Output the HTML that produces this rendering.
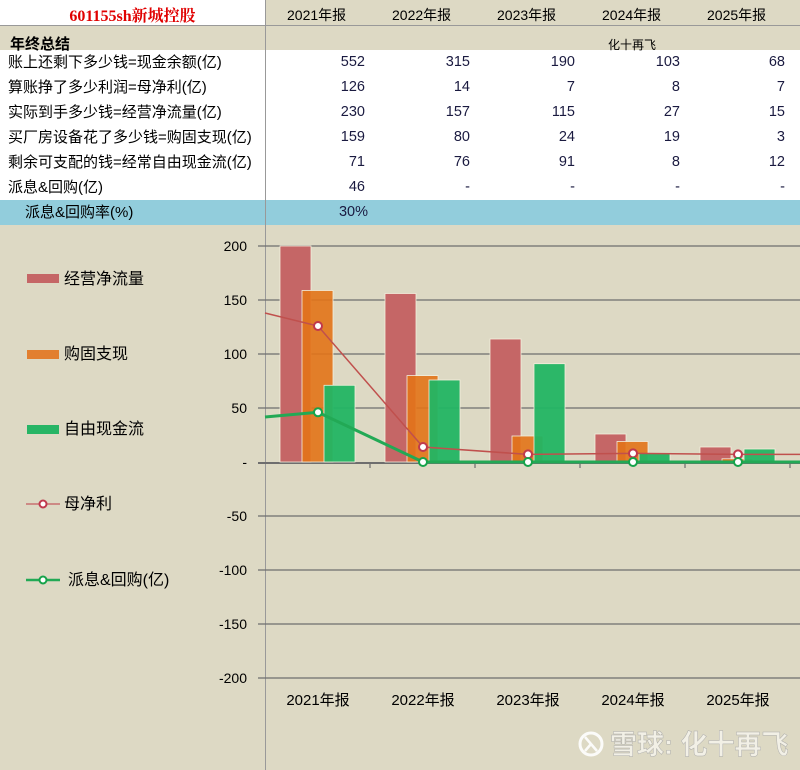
<!DOCTYPE html>
<html><head><meta charset="utf-8"><style>
body{margin:0;width:800px;height:770px;overflow:hidden;background:#DDD9C4;font-family:"Liberation Sans","Noto Sans CJK SC",sans-serif;position:relative}
.a{position:absolute;white-space:nowrap}
.r{position:absolute;height:25px;line-height:25px;font-size:15px;color:#000}
.n{position:absolute;width:80px;text-align:right;font-size:14.5px;color:#1a1a40}
</style></head><body>
<div class="a" style="left:0;top:0;width:265px;height:26px;background:#fff"></div>
<div class="a" style="left:0;top:25px;width:800px;height:1px;background:#999"></div>
<div class="a" style="left:0;top:50px;width:265px;height:150px;background:#fff"></div>
<div class="a" style="left:265px;top:50px;width:535px;height:150px;background:#fff"></div>
<div class="a" style="left:0;top:200px;width:800px;height:25px;background:#92CDDC"></div>
<div class="a" style="left:265px;top:0;width:1px;height:770px;background:#999"></div>
<div class="a" style="left:0;top:3px;width:265px;text-align:center;color:#e00000;font-weight:bold;font-size:16px;font-family:'Liberation Serif','Noto Serif CJK SC',serif">601155sh新城控股</div>
<div class="a" style="left:287px;top:5px;font-size:14px">2021年报</div>
<div class="a" style="left:392px;top:5px;font-size:14px">2022年报</div>
<div class="a" style="left:497px;top:5px;font-size:14px">2023年报</div>
<div class="a" style="left:602px;top:5px;font-size:14px">2024年报</div>
<div class="a" style="left:707px;top:5px;font-size:14px">2025年报</div>
<div class="a" style="left:10px;top:33px;font-size:15px;font-weight:bold">年终总结</div>
<div class="a" style="left:608px;top:36px;font-size:12px">化十再飞</div>
<div class="r" style="left:8px;top:50px">账上还剩下多少钱=现金余额(亿)</div>
<div class="r" style="left:8px;top:75px">算账挣了多少利润=母净利(亿)</div>
<div class="r" style="left:8px;top:100px">实际到手多少钱=经营净流量(亿)</div>
<div class="r" style="left:8px;top:125px">买厂房设备花了多少钱=购固支现(亿)</div>
<div class="r" style="left:8px;top:150px">剩余可支配的钱=经常自由现金流(亿)</div>
<div class="r" style="left:8px;top:175px">派息&amp;回购(亿)</div>
<div class="r" style="left:25px;top:200px">派息&amp;回购率(%)</div>
<div class="n" style="left:285px;top:54px">552</div><div class="n" style="left:390px;top:54px">315</div><div class="n" style="left:495px;top:54px">190</div><div class="n" style="left:600px;top:54px">103</div><div class="n" style="left:705px;top:54px">68</div>
<div class="n" style="left:285px;top:79px">126</div><div class="n" style="left:390px;top:79px">14</div><div class="n" style="left:495px;top:79px">7</div><div class="n" style="left:600px;top:79px">8</div><div class="n" style="left:705px;top:79px">7</div>
<div class="n" style="left:285px;top:104px">230</div><div class="n" style="left:390px;top:104px">157</div><div class="n" style="left:495px;top:104px">115</div><div class="n" style="left:600px;top:104px">27</div><div class="n" style="left:705px;top:104px">15</div>
<div class="n" style="left:285px;top:129px">159</div><div class="n" style="left:390px;top:129px">80</div><div class="n" style="left:495px;top:129px">24</div><div class="n" style="left:600px;top:129px">19</div><div class="n" style="left:705px;top:129px">3</div>
<div class="n" style="left:285px;top:154px">71</div><div class="n" style="left:390px;top:154px">76</div><div class="n" style="left:495px;top:154px">91</div><div class="n" style="left:600px;top:154px">8</div><div class="n" style="left:705px;top:154px">12</div>
<div class="n" style="left:285px;top:179px">46</div><div class="n" style="left:390px;top:179px">-</div><div class="n" style="left:495px;top:179px">-</div><div class="n" style="left:600px;top:179px">-</div><div class="n" style="left:705px;top:179px">-</div>
<div class="n" style="left:288px;top:204px">30%</div>

<svg class="a" style="left:0;top:0" width="800" height="770" font-family="Liberation Sans,Noto Sans CJK SC,sans-serif">
<g stroke="#6e6e6e" stroke-width="1.2">
<line x1="258" y1="246" x2="800" y2="246"/><line x1="258" y1="300" x2="800" y2="300"/><line x1="258" y1="354" x2="800" y2="354"/><line x1="258" y1="408" x2="800" y2="408"/>
<line x1="258" y1="516" x2="800" y2="516"/><line x1="258" y1="570" x2="800" y2="570"/><line x1="258" y1="624" x2="800" y2="624"/><line x1="258" y1="678" x2="800" y2="678"/>
<line x1="258" y1="463" x2="800" y2="463" stroke-width="2"/>
<line x1="370" y1="463" x2="370" y2="468"/><line x1="475" y1="463" x2="475" y2="468"/><line x1="580" y1="463" x2="580" y2="468"/><line x1="685" y1="463" x2="685" y2="468"/><line x1="790" y1="463" x2="790" y2="468"/>
</g>
<g font-size="14" text-anchor="end" fill="#000">
<text x="247" y="251">200</text><text x="247" y="305">150</text><text x="247" y="359">100</text><text x="247" y="413">50</text><text x="247" y="467">-</text>
<text x="247" y="521">-50</text><text x="247" y="575">-100</text><text x="247" y="629">-150</text><text x="247" y="683">-200</text>
</g>
<g font-size="15" text-anchor="middle" fill="#000">
<text x="318" y="705">2021年报</text><text x="423" y="705">2022年报</text><text x="528" y="705">2023年报</text><text x="633" y="705">2024年报</text><text x="738" y="705">2025年报</text>
</g>
<g stroke="#f3eedc" stroke-width="0.8">
<g fill="#C56666">
<rect x="280" y="246" width="31" height="216"/><rect x="385" y="293.5" width="31" height="168.5"/><rect x="490" y="339" width="31" height="123"/><rect x="595" y="434" width="31" height="28"/><rect x="700" y="447" width="31" height="15"/>
</g>
<g fill="#E27318" fill-opacity="0.9">
<rect x="302" y="290.5" width="31" height="171.5"/><rect x="407" y="375.6" width="31" height="86.4"/><rect x="512" y="436" width="31" height="26"/><rect x="617" y="441.5" width="31" height="20.5"/><rect x="722" y="458.8" width="31" height="3.2"/>
</g>
<g fill="#22B563" fill-opacity="0.95">
<rect x="324" y="385.3" width="31" height="76.7"/><rect x="429" y="380" width="31" height="82"/><rect x="534" y="363.7" width="31" height="98.3"/><rect x="639" y="453.4" width="31" height="8.6"/><rect x="744" y="449" width="31" height="13"/>
</g>
</g>
<polyline points="265,313 318,326 423,447 528,454.4 633,453.4 738,454.4 800,454.4" fill="none" stroke="#C0504D" stroke-width="1.5"/>
<polyline points="265,417 318,412.3 423,462 528,462 633,462 738,462 800,462" fill="none" stroke="#22A955" stroke-width="3"/>
<g fill="#fff" stroke="#C0394D" stroke-width="2">
<circle cx="318" cy="326" r="4"/><circle cx="423" cy="447" r="4"/><circle cx="528" cy="454.4" r="4"/><circle cx="633" cy="453.4" r="4"/><circle cx="738" cy="454.4" r="4"/>
</g>
<g fill="#fff" stroke="#16A34A" stroke-width="2">
<circle cx="318" cy="412.3" r="4"/><circle cx="423" cy="462" r="4"/><circle cx="528" cy="462" r="4"/><circle cx="633" cy="462" r="4"/><circle cx="738" cy="462" r="4"/>
</g>
<rect x="27" y="274" width="32" height="9" fill="#C56666"/>
<rect x="27" y="350" width="32" height="9" fill="#E27F2F"/>
<rect x="27" y="425" width="32" height="9" fill="#27B565"/>
<line x1="26" y1="504" x2="60" y2="504" stroke="#C87070" stroke-width="1.5"/><circle cx="43" cy="504" r="3.5" fill="#fff" stroke="#C0394D" stroke-width="2"/>
<line x1="26" y1="580" x2="60" y2="580" stroke="#22A955" stroke-width="2.5"/><circle cx="43" cy="580" r="3.5" fill="#fff" stroke="#16A34A" stroke-width="2"/>
<g font-size="16" fill="#000">
<text x="64" y="284">经营净流量</text><text x="64" y="359">购固支现</text><text x="64" y="434">自由现金流</text><text x="64" y="509">母净利</text><text x="68" y="585">派息&amp;回购(亿)</text>
</g>
<g opacity="0.9">
<circle cx="591" cy="744" r="11" fill="none" stroke="#fff" stroke-width="3"/>
<path d="M585 737 L597 751 M585 751 L591 744" stroke="#fff" stroke-width="2.5" fill="none"/>
<text x="610" y="754" font-size="27" font-weight="bold" fill="#f5f3ea" stroke="#aaa" stroke-width="0.5">雪球: 化十再飞</text>
</g>
</svg>
</body></html>
